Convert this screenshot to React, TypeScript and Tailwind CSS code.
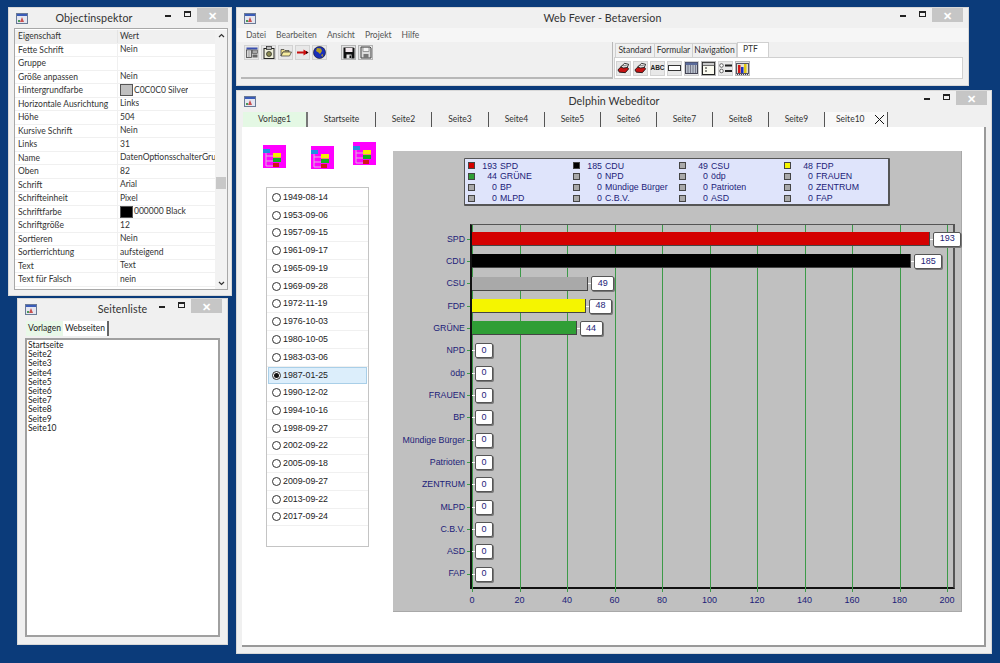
import type { ReactNode } from 'react';

const props: [string, string, string?][] = [
  ['Fette Schrift', 'Nein'],
  ['Gruppe', ''],
  ['Größe anpassen', 'Nein'],
  ['Hintergrundfarbe', 'C0C0C0 Silver', 'silver'],
  ['Horizontale Ausrichtung', 'Links'],
  ['Höhe', '504'],
  ['Kursive Schrift', 'Nein'],
  ['Links', '31'],
  ['Name', 'DatenOptionsschalterGruppe'],
  ['Oben', '82'],
  ['Schrift', 'Arial'],
  ['Schrifteinheit', 'Pixel'],
  ['Schriftfarbe', '000000 Black', 'black'],
  ['Schriftgröße', '12'],
  ['Sortieren', 'Nein'],
  ['Sortierrichtung', 'aufsteigend'],
  ['Text', 'Text'],
  ['Text für Falsch', 'nein'],
];

const dates = [
  '1949-08-14', '1953-09-06', '1957-09-15', '1961-09-17', '1965-09-19', '1969-09-28', '1972-11-19',
  '1976-10-03', '1980-10-05', '1983-03-06', '1987-01-25', '1990-12-02', '1994-10-16', '1998-09-27',
  '2002-09-22', '2005-09-18', '2009-09-27', '2013-09-22', '2017-09-24',
];

const parties: { name: string; value: number; color: string }[] = [
  { name: 'SPD', value: 193, color: '#d40000' },
  { name: 'CDU', value: 185, color: '#000000' },
  { name: 'CSU', value: 49, color: '#a9a9a9' },
  { name: 'FDP', value: 48, color: '#f5f500' },
  { name: 'GRÜNE', value: 44, color: '#2f9e35' },
  { name: 'NPD', value: 0, color: '#a9a9a9' },
  { name: 'ödp', value: 0, color: '#a9a9a9' },
  { name: 'FRAUEN', value: 0, color: '#a9a9a9' },
  { name: 'BP', value: 0, color: '#a9a9a9' },
  { name: 'Mündige Bürger', value: 0, color: '#a9a9a9' },
  { name: 'Patrioten', value: 0, color: '#a9a9a9' },
  { name: 'ZENTRUM', value: 0, color: '#a9a9a9' },
  { name: 'MLPD', value: 0, color: '#a9a9a9' },
  { name: 'C.B.V.', value: 0, color: '#a9a9a9' },
  { name: 'ASD', value: 0, color: '#a9a9a9' },
  { name: 'FAP', value: 0, color: '#a9a9a9' },
];

const ticks = [0, 20, 40, 60, 80, 100, 120, 140, 160, 180, 200];
const pxPerUnit = 2.375;

const sheetTabs = [
  { label: 'Startseite', w: 'w-[68px]' },
  { label: 'Seite2', w: 'w-[56px]' },
  { label: 'Seite3', w: 'w-[57px]' },
  { label: 'Seite4', w: 'w-[56px]' },
  { label: 'Seite5', w: 'w-[56px]' },
  { label: 'Seite6', w: 'w-[56px]' },
  { label: 'Seite7', w: 'w-[56px]' },
  { label: 'Seite8', w: 'w-[56px]' },
  { label: 'Seite9', w: 'w-[56px]' },
];

function AppIcon() {
  return (
    <svg width="12" height="11" viewBox="0 0 12 11" className="shrink-0">
      <rect x="0.5" y="0.5" width="11" height="10" fill="#e4e6f0" stroke="#6a7a96" />
      <rect x="1" y="1" width="10" height="2" fill="#3a5cb8" />
      <path d="M4 9 L6 4 L8 9 Z" fill="#c85050" />
      <rect x="2" y="7" width="2" height="2" fill="#4a9a5a" />
    </svg>
  );
}

function TitleBar({ title, controlsPad, titlePad = '' }: { title: string; controlsPad: string; titlePad?: string }) {
  return (
    <div className="grid h-[20px] shrink-0 grid-cols-[minmax(0,1fr)_auto_minmax(0,1fr)] items-center">
      <div className="pl-[7px]">
        <AppIcon />
      </div>
      <div className={`whitespace-nowrap pt-px text-center font-['Lato',sans-serif] text-[10.7px] tracking-[0.01em] text-[#333] ${titlePad}`}>{title}</div>
      <div className={`flex h-[14px] min-w-0 items-start justify-end self-start ${controlsPad}`}>
        <div className="mt-[7px] mr-[13px] h-[2px] w-[6px] shrink-0 bg-[#222]" />
        <div className="mt-[3px] mr-[6px] h-[6px] w-[7px] shrink-0 border border-t-2 border-[#222]" />
        <div className="flex h-[14px] w-[31px] shrink-0 items-center justify-center bg-[#c6c6c6] text-[11px] font-bold leading-none text-white">✕</div>
      </div>
    </div>
  );
}

function Win({ pos, title, controlsPad, titlePad, children }: { pos: string; title: string; controlsPad: string; titlePad?: string; children: ReactNode }) {
  return (
    <section className={`absolute flex flex-col border border-[#d8d8d8] bg-[#f0f0f0] ${pos}`}>
      <TitleBar title={title} controlsPad={controlsPad} titlePad={titlePad} />
      {children}
    </section>
  );
}

function ToolBtn({ children, raised = false }: { children: ReactNode; raised?: boolean }) {
  return (
    <div className={`flex h-[15px] w-[15px] shrink-0 items-center justify-center border ${raised ? 'border-[#b4b4b4] bg-[#e4e4e4]' : 'border-[#d2d2d2] bg-[#e8e8e8]'}`}>
      {children}
    </div>
  );
}

function Floppy({ ghost = false }: { ghost?: boolean }) {
  if (ghost) {
    return (
      <svg width="12" height="13" viewBox="0 0 12 13">
        <path d="M1 1 H10 L11 2 V12 H1 Z" fill="#dcdcdc" stroke="#444" />
        <rect x="3" y="1.5" width="6" height="4" fill="#f4f4f4" stroke="#666" strokeWidth="0.6" />
        <rect x="3.5" y="8" width="5" height="4" fill="#777" />
      </svg>
    );
  }
  return (
    <svg width="12" height="12" viewBox="0 0 12 12">
      <path d="M0.5 0.5 H10.5 L11.5 1.5 V11.5 H0.5 Z" fill="#111" />
      <rect x="2.5" y="1" width="7" height="4" fill="#f2e8ec" />
      <rect x="3.5" y="7.5" width="5" height="4" fill="#e8e8e8" />
      <rect x="6.5" y="8.5" width="1.5" height="2.5" fill="#111" />
    </svg>
  );
}

function Stamp() {
  return (
    <svg width="14" height="12" viewBox="0 0 14 12">
      <path d="M1 8 L5 4 L11 5 L12.5 7 L9 11 L2.5 10.5 Z" fill="#c81414" stroke="#111" strokeWidth="0.9" />
      <path d="M4 5 L8 1 L12.5 2 L11 5.5 L7 6 Z" fill="#eeeeee" stroke="#111" strokeWidth="0.9" />
      <path d="M6 3.5 L10.5 3.5" stroke="#444" strokeWidth="0.7" />
    </svg>
  );
}

function LeftToolbar() {
  return (
    <div className="flex items-center pl-[3px] pt-[3px]">
      <div className="flex gap-[2px]">
        <ToolBtn>
          <svg width="12" height="11" viewBox="0 0 12 11">
            <rect x="0.5" y="0.5" width="11" height="2" fill="#3a4fb0" />
            <rect x="0.5" y="3" width="5" height="7.5" fill="#f4f4f4" stroke="#444" strokeWidth="0.8" />
            <path d="M1.5 5 H4.5 M1.5 7 H4.5 M1.5 9 H4.5" stroke="#555" strokeWidth="0.7" />
            <rect x="6.5" y="3" width="5" height="3.5" fill="#aaa" stroke="#444" strokeWidth="0.6" />
            <rect x="6.5" y="7.5" width="5" height="3" fill="#666" />
          </svg>
        </ToolBtn>
        <ToolBtn>
          <svg width="12" height="13" viewBox="0 0 12 13">
            <rect x="1" y="2.5" width="10" height="10" fill="#eeeed8" stroke="#222" />
            <rect x="3.5" y="0.5" width="5" height="3" fill="#bbb" stroke="#222" strokeWidth="0.7" />
            <circle cx="6" cy="8" r="2.5" fill="#8a8a50" stroke="#222" strokeWidth="0.7" />
          </svg>
        </ToolBtn>
        <ToolBtn>
          <svg width="12" height="9" viewBox="0 0 12 9">
            <path d="M1 1.5 H4 L5 2.5 H9 V4 H3 L1 8 Z" fill="#efe08a" stroke="#333" strokeWidth="0.7" />
            <path d="M3 4 H11.5 L9.5 8 H1 Z" fill="#f6ec9e" stroke="#333" strokeWidth="0.7" />
          </svg>
        </ToolBtn>
        <ToolBtn>
          <svg width="12" height="7" viewBox="0 0 12 7">
            <path d="M0 2.5 H6.5 V0.5 L11.5 3.5 L6.5 6.5 V4.5 H0 Z" fill="#c80f0f" />
            <path d="M9 2 L11.5 3.5 L9 5 Z" fill="#300" />
          </svg>
        </ToolBtn>
        <ToolBtn>
          <svg width="13" height="13" viewBox="0 0 13 13">
            <circle cx="6.5" cy="6.5" r="6" fill="#1a2fb8" stroke="#111" strokeWidth="0.6" />
            <path d="M4 2 L8 2.5 L9 5 L7 8 L5.5 6.5 L3 5 Z" fill="#b8a020" />
            <path d="M8 9 L10 8 L9.5 11 Z" fill="#b8a020" />
          </svg>
        </ToolBtn>
      </div>
      <div className="ml-[14px] flex gap-[2px]">
        <ToolBtn raised><Floppy /></ToolBtn>
        <ToolBtn raised><Floppy ghost /></ToolBtn>
      </div>
    </div>
  );
}

function PaletteIcons() {
  return (
    <div className="flex items-center gap-[2px] pl-[1px]">
      <ToolBtn><Stamp /></ToolBtn>
      <ToolBtn><Stamp /></ToolBtn>
      <ToolBtn>
        <span className="font-['Liberation_Sans',sans-serif] text-[6.5px] font-bold leading-none text-[#222]">ABC</span>
      </ToolBtn>
      <ToolBtn>
        <div className="h-[6px] w-[13px] shrink-0 border border-[#333] bg-white" />
      </ToolBtn>
      <ToolBtn>
        <svg width="13" height="12" viewBox="0 0 13 12">
          <rect x="0.5" y="0.5" width="12" height="11" fill="#b8c0cc" stroke="#445" />
          <path d="M3 3 V11 M5.5 3 V11 M8 3 V11 M10.5 3 V11" stroke="#667" strokeWidth="0.8" />
          <rect x="0.5" y="0.5" width="12" height="2.5" fill="#5a6a9a" />
        </svg>
      </ToolBtn>
      <ToolBtn raised>
        <svg width="13" height="13" viewBox="0 0 13 13">
          <rect x="0.5" y="0.5" width="12" height="12" fill="#fbfbf0" stroke="#222" />
          <rect x="0.5" y="0.5" width="12" height="3" fill="#c8c8c8" stroke="#222" strokeWidth="0.6" />
          <path d="M3 6 H5 M3 9 H5" stroke="#222" />
        </svg>
      </ToolBtn>
      <ToolBtn>
        <svg width="13" height="11" viewBox="0 0 13 11">
          <circle cx="2.5" cy="2.5" r="1.8" fill="#fff" stroke="#333" strokeWidth="0.7" />
          <circle cx="2.5" cy="8" r="1.8" fill="#fff" stroke="#333" strokeWidth="0.7" />
          <rect x="6" y="1.5" width="7" height="2" fill="#222" />
          <rect x="6" y="7" width="7" height="2" fill="#222" />
        </svg>
      </ToolBtn>
      <ToolBtn raised>
        <svg width="13" height="13" viewBox="0 0 13 13">
          <rect x="0.5" y="1.5" width="12" height="10" fill="#e4e0d0" stroke="#556" />
          <path d="M1 12.5 H12" stroke="#445" strokeDasharray="1 1" />
          <rect x="2" y="3" width="2.5" height="8" fill="#d01818" />
          <rect x="5" y="5" width="2.5" height="6" fill="#1a30c0" />
          <rect x="8" y="2" width="2.5" height="9" fill="#e0c810" />
        </svg>
      </ToolBtn>
    </div>
  );
}

function PinkIcon({ cls }: { cls: string }) {
  return (
    <svg width="23" height="23" viewBox="0 0 23 23" className={cls}>
      <rect width="23" height="23" fill="#ff00ff" />
      <rect x="0" y="4" width="7" height="4" fill="#1f8fe0" />
      <path d="M3 8 V21 H10 M3 11 H10 M3 16 H10" stroke="#d8c0d8" strokeWidth="1" fill="none" />
      <rect x="10" y="8" width="8" height="4.5" fill="#f5f000" />
      <rect x="10" y="13" width="8" height="4" fill="#10b020" />
      <rect x="10" y="18" width="6" height="4" fill="#d01818" />
    </svg>
  );
}

function Radio({ checked = false }: { checked?: boolean }) {
  return (
    <div className="flex h-[9px] w-[9px] shrink-0 items-center justify-center rounded-full border border-[#333] bg-white">
      {checked && <div className="h-[5px] w-[5px] rounded-full bg-[#111]" />}
    </div>
  );
}

function RadioGroup() {
  return (
    <div className="ml-[24px] mt-[19px] flex h-[360px] w-[103px] flex-col border border-[#c4c4c4] bg-white pt-[1px] font-['Liberation_Sans',sans-serif]">
      {dates.map((d) => {
        const sel = d === '1987-01-25';
        return (
          <div
            key={d}
            className={`flex h-[17.75px] shrink-0 items-center gap-[2px] text-[8.8px] text-[#222] ${
              sel ? 'mx-[1px] border border-[#a9cfe8] bg-[#dceefb] pl-[3px]' : 'border-b border-[#f0f0f0] pl-[5px]'
            }`}
          >
            <Radio checked={sel} />
            <span>{d}</span>
          </div>
        );
      })}
    </div>
  );
}

function Legend() {
  return (
    <div className="ml-[71px] mt-[7px] grid h-[48px] w-[426px] grid-cols-[105px_106px_105px_1fr] content-center rounded-[1px] border-2 border-t border-l border-[#555] bg-[#dfe4fb] pl-[3px] pt-px font-['Liberation_Sans',sans-serif] text-[8.8px] leading-[10.7px] text-[#1c1c78]">
      {parties.map((p) => (
        <div key={p.name} className="flex items-center">
          <span className="h-[7px] w-[7px] shrink-0 border border-[#444]" style={{ backgroundColor: p.color }} />
          <span className="w-[22px] shrink-0 text-right">{p.value}</span>
          <span className="ml-[3px] whitespace-nowrap">{p.name}</span>
        </div>
      ))}
    </div>
  );
}

function Chart() {
  return (
    <div className="mt-[18px] flex font-['Liberation_Sans',sans-serif]">
      <div className="flex w-[77px] flex-col pt-[4px] text-[8.8px] text-[#1c1c78]">
        {parties.map((p) => (
          <div key={p.name} className="flex h-[22.33px] items-center justify-end whitespace-nowrap">
            <span>{p.name}</span>
            <span className="ml-[2px] h-px w-[3px] bg-[#3c9a48]" />
          </div>
        ))}
      </div>
      <div>
        <div className="relative flex h-[365px] w-[485px] flex-col border-t border-r-2 border-b-2 border-l-2 border-[#555] border-b-[#111] border-l-[#111] pt-[3px]">
          {ticks.map((t) => (
            <div key={t} className="absolute -bottom-[5px] top-0 w-px bg-[#3c9a48]" style={{ left: t * pxPerUnit }} />
          ))}
          {parties.map((p) => (
            <div key={p.name} className="relative flex h-[22.33px] shrink-0 items-center">
              {p.value > 0 && (
                <div className="h-[14px] shrink-0 border-r border-b border-[#444]" style={{ width: p.value * pxPerUnit, backgroundColor: p.color }} />
              )}
              <div className="h-px w-[3px] shrink-0 bg-white" />
              <div className={`flex h-[15px] shrink-0 items-center justify-center rounded-[2px] border border-[#555] bg-white text-[9px] text-[#1c1c78] shadow-[1px_1px_0_#777] ${p.value > 99 ? 'w-[28px]' : p.value > 9 ? 'w-[23px]' : 'w-[18px]'}`}>
                {p.value}
              </div>
            </div>
          ))}
        </div>
        <div className="relative mt-[5px] h-[12px] text-[9px] text-[#1c1c78]">
          {ticks.map((t) => (
            <span key={t} className="absolute -translate-x-1/2 leading-[12px]" style={{ left: t * pxPerUnit + 2 }}>
              {t}
            </span>
          ))}
        </div>
      </div>
    </div>
  );
}

export default function App() {
  return (
    <div className="relative h-[663px] w-[1000px] overflow-hidden bg-[#0b3b7a] font-['Lato',sans-serif]">
      <Win pos="left-[8px] top-[7px] h-[289px] w-[224px]" title="Objectinspektor" controlsPad="pr-[3px]" titlePad="pr-[52px]">
        <div className="ml-[5px] flex h-[262px] w-[214px] border border-[#a8a8a8] bg-white pt-px text-[8.5px] text-[#333]">
          <div className="min-w-0 flex-1">
            <div className="flex h-[13.5px] items-center bg-[#f0f0f0]">
              <span className="w-[103px] border-r border-[#e4e4e4] pl-[3px]">Eigenschaft</span>
              <span className="pl-[2px]">Wert</span>
            </div>
            {props.map(([k, v, sw]) => (
              <div key={k} className="flex h-[13.5px] items-center border-b border-[#f0f0f0]">
                <span className="h-full w-[103px] shrink-0 border-r border-[#f0f0f0] pl-[3px] leading-[13.5px]">{k}</span>
                <span className="flex items-center overflow-hidden whitespace-nowrap pl-[2px]">
                  {sw && (
                    <span className={`mr-[1px] h-[12px] w-[13px] shrink-0 border border-[#555] ${sw === 'black' ? 'bg-black' : 'bg-[#c0c0c0]'}`} />
                  )}
                  {v}
                </span>
              </div>
            ))}
          </div>
          <div className="relative flex w-[12px] shrink-0 flex-col items-center justify-between bg-[#f2f2f2] py-[3px]">
            <svg width="7" height="5" viewBox="0 0 7 5"><path d="M1 4 L3.5 1.5 L6 4" stroke="#333" strokeWidth="1.2" fill="none" /></svg>
            <div className="absolute left-[1px] top-[147px] h-[12px] w-[10px] bg-[#c8c8c8]" />
            <svg width="7" height="5" viewBox="0 0 7 5"><path d="M1 1 L3.5 3.5 L6 1" stroke="#333" strokeWidth="1.2" fill="none" /></svg>
          </div>
        </div>
      </Win>

      <Win pos="left-[17px] top-[298px] h-[347px] w-[211px]" title="Seitenliste" controlsPad="pr-[5px]">
        <div className="mx-[5px] mt-[2px] flex flex-1 flex-col text-[8.5px] text-[#222]">
          <div className="flex h-[15px] pl-[3px]">
            <div className="flex w-[37px] items-center justify-center bg-[#e8f8e8]">Vorlagen</div>
            <div className="flex w-[46px] items-center justify-center border-r-2 border-[#666] bg-white">Webseiten</div>
          </div>
          <div className="mx-[2px] mb-[7px] mt-[2px] flex-1 border-2 border-[#a0a0a0] bg-white pl-px pt-px leading-[9.2px]">
            {['Startseite', 'Seite2', 'Seite3', 'Seite4', 'Seite5', 'Seite6', 'Seite7', 'Seite8', 'Seite9', 'Seite10'].map((s) => (
              <div key={s}>{s}</div>
            ))}
          </div>
        </div>
      </Win>

      <Win pos="left-[236px] top-[7px] h-[79px] w-[733px]" title="Web Fever - Betaversion" controlsPad="pr-[5px]">
        <div className="flex h-[14px] items-center gap-[10px] bg-[#f6f6f6] pl-[9px] text-[8.5px] text-[#555]">
          {['Datei', 'Bearbeiten', 'Ansicht', 'Projekt', 'Hilfe'].map((m) => (
            <span key={m}>{m}</span>
          ))}
        </div>
        <div className="mx-[4px] flex h-[37px]">
          <div className="w-[372px] shrink-0 border-r border-b-2 border-[#b8b8b8] bg-[#f0f0f0]">
            <LeftToolbar />
          </div>
          <div className="flex w-[350px] flex-col pl-[1px] text-[8.5px] text-[#333]">
            <div className="flex h-[15px] items-end pl-[1px]">
              <div className="flex h-[14px] w-[40px] items-center justify-center border border-b-0 border-[#d0d0d0]">Standard</div>
              <div className="flex h-[14px] w-[38px] items-center justify-center border border-b-0 border-l-0 border-[#d0d0d0]">Formular</div>
              <div className="flex h-[14px] w-[44px] items-center justify-center border border-b-0 border-l-0 border-[#d0d0d0]">Navigation</div>
              <div className="flex h-[15px] w-[32px] items-start justify-start border border-b-0 border-[#d0d0d0] bg-white pl-[5px]">PTF</div>
            </div>
            <div className="flex h-[22px] items-center border border-[#d0d0d0] bg-white">
              <PaletteIcons />
            </div>
          </div>
        </div>
      </Win>

      <Win pos="left-[236px] top-[90px] h-[564px] w-[756px]" title="Delphin Webeditor" controlsPad="pr-[4px]">
        <div className="mx-[6px] mt-[1px] flex h-[15px] shrink-0 items-stretch bg-[#f0f0f0] text-[8.5px] text-[#333]">
          <div className="flex w-[65px] items-center justify-center border-r-2 border-[#777] bg-[#e4f8e4]">Vorlage1</div>
          {sheetTabs.map((t) => (
            <div key={t.label} className={`flex items-center justify-center border-r border-[#555] ${t.w}`}>
              {t.label}
            </div>
          ))}
          <div className="flex w-[63px] items-center border-r border-[#555] bg-[#f8f8f8] pl-[11px]">
            Seite10
            <svg width="11" height="11" viewBox="0 0 11 11" className="ml-[9px]"><path d="M1 1 L10 10 M10 1 L1 10" stroke="#111" strokeWidth="1" /></svg>
          </div>
        </div>
        <div className="mx-[5px] mb-[6px] flex min-h-0 flex-1 border-r-2 border-b-2 border-[#999] bg-white">
          <div className="w-[151px] shrink-0 pt-[15px]">
            <div className="flex h-[26px] items-start pl-[21px]">
              <PinkIcon cls="mt-[3px]" />
              <PinkIcon cls="ml-[25px] mt-[4px]" />
              <PinkIcon cls="ml-[19px]" />
            </div>
            <RadioGroup />
          </div>
          <div className="mt-[24px] h-[461px] w-[569px] border-r border-b border-[#a8a8a8] bg-[#c0c0c0]">
            <Legend />
            <Chart />
          </div>
        </div>
      </Win>
    </div>
  );
}
